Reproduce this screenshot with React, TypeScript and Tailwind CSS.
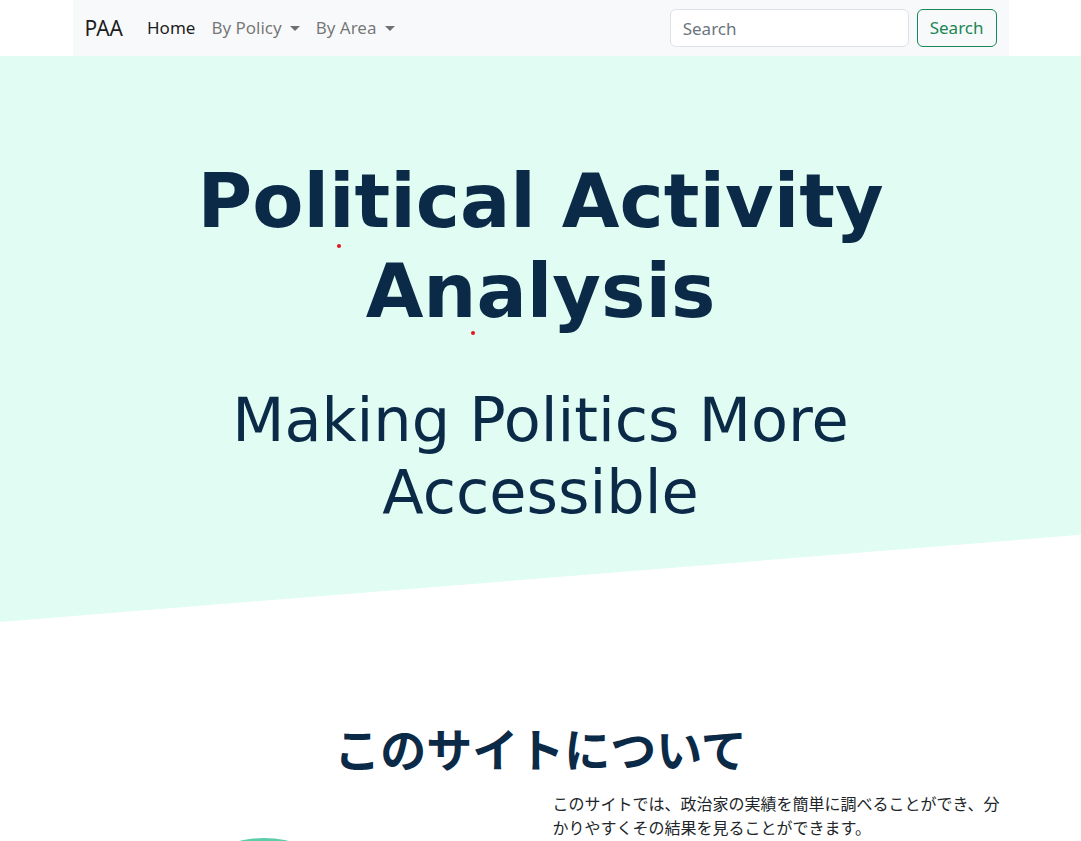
const NavCaret = () => (
    <span className="ml-2 inline-block align-[3px] border-t-[5px] border-x-[5px] border-b-0 border-t-current border-x-transparent"></span>
);

const Navbar = () => {
    return (
        <div className="mx-auto w-[936px] bg-[#f8f9fa] h-14 px-3 flex items-center justify-between font-['Noto_Sans','DejaVu_Sans',sans-serif]">
            <div className="flex items-center">
                <a className="text-[21px] leading-[30px] text-black/90 mr-4">PAA</a>
                <a className="px-2 text-[17px] leading-6 text-black/90">Home</a>
                <a className="px-2 text-[17px] leading-6 text-black/55">
                    By Policy
                    <NavCaret />
                </a>
                <a className="px-2 text-[17px] leading-6 text-black/55">
                    By Area
                    <NavCaret />
                </a>
            </div>
            <div className="flex items-center gap-2">
                <input
                    className="w-[239px] h-[38px] rounded-[6px] border border-[#dee2e6] bg-white px-3 text-[17px] text-[#212529] placeholder:text-[#6c757d] outline-none"
                    placeholder="Search"
                />
                <button className="h-[38px] px-3 rounded-[6px] border border-[#198754] text-[#198754] text-[17px]">
                    Search
                </button>
            </div>
        </div>
    );
};

const App = () => {
    return (
        <div className="bg-white min-h-[841px] overflow-hidden">
            <Navbar />
            <section className="relative bg-[#e1fcf3] h-[566px] pt-[101px] [clip-path:polygon(0_0,100%_0,100%_84.6%,0_100%)] text-[#0b2a47] text-center font-['DejaVu_Sans',sans-serif]">
                <div className="mx-auto w-[936px]">
                    <h1 className="text-[74.6px] leading-[1.2] font-bold">Political Activity Analysis</h1>
                    <p className="mt-[49px] text-[60.5px] leading-[1.19] font-normal">Making Politics More Accessible</p>
                </div>
                <span className="absolute left-[337px] top-[188px] w-1 h-1 rounded-full bg-[#e8141c]"></span>
                <span className="absolute left-[471px] top-[275px] w-1 h-1 rounded-full bg-[#e8141c]"></span>
            </section>
            <section className="mx-auto w-[960px] px-3 pt-[98px] text-[#0b2a47] font-['Noto_Sans','Noto_Sans_CJK_JP',sans-serif]">
                <h2 className="text-center text-[46px] leading-[1.2] font-bold font-['Noto_Sans_CJK_JP',sans-serif]">このサイトについて</h2>
                <div className="mt-[16px] grid grid-cols-2 gap-6">
                    <div className="relative h-[60px]">
                        <svg className="absolute left-[85px] top-[47px]" width="212" height="12" viewBox="0 0 212 12">
                            <circle cx="106" cy="106" r="106" fill="#5ccdab" />
                        </svg>
                    </div>
                    <p className="text-[16px] leading-6 text-[#212529] font-['Noto_Sans_CJK_JP',sans-serif]">
                        このサイトでは、政治家の実績を簡単に調べることができ、分かりやすくその結果を見ることができます。
                    </p>
                </div>
            </section>
        </div>
    );
};

export default App;
